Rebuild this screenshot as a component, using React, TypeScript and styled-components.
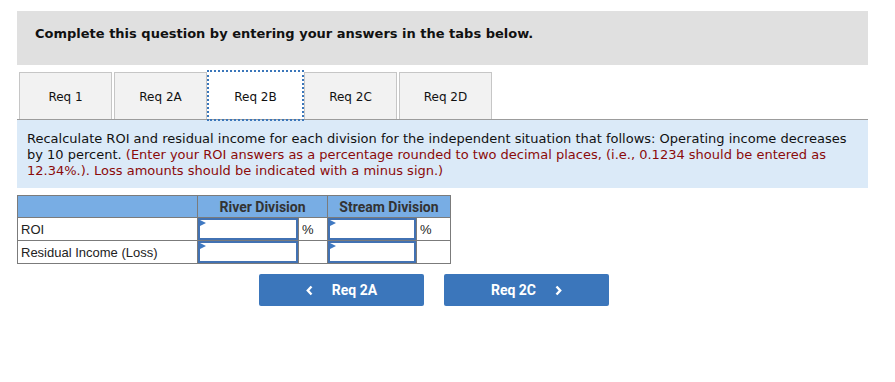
import React from "react";
import styled, { createGlobalStyle } from "styled-components";

const Global = createGlobalStyle`
  html, body { margin: 0; padding: 0; background: #fff; }
  body { font-family: "DejaVu Sans", Verdana, sans-serif; }
`;

const Page = styled.div`
  width: 851px;
  margin: 11px 0 0 17px;
`;

const Header = styled.div`
  background: #e0e0e0;
  height: 54px;
  box-sizing: border-box;
  padding: 15px 18px 0;
  font-family: "DejaVu Sans", Verdana, sans-serif;
  font-weight: bold;
  font-size: 13px;
  line-height: 16px;
  color: #111;
`;

const TabRow = styled.div`
  display: flex;
  gap: 2px;
  margin-top: 7px;
  padding-left: 2px;
  border-bottom: 1px solid #9c9c9c;
`;

const Tab = styled.div<{ $active?: boolean }>`
  width: 93px;
  height: 47px;
  box-sizing: border-box;
  display: flex;
  align-items: center;
  justify-content: center;
  font-size: 12px;
  color: #111;
  background: ${(p) => (p.$active ? "#fff" : "#f2f2f2")};
  border: 1px solid ${(p) => (p.$active ? "#fff" : "#c6c6c6")};
  border-bottom: none;
  padding-top: 2px;
  position: relative;
  outline: ${(p) => (p.$active ? "2px dotted #3a76ba" : "none")};
  z-index: ${(p) => (p.$active ? 2 : 0)};
`;

const Instructions = styled.div`
  background: #dbeaf8;
  padding: 11px 10px 9px;
  font-size: 13px;
  line-height: 16px;
  color: #111;
`;

const Red = styled.span`
  color: #8b0a0a;
`;

const Table = styled.table`
  margin-top: 7px;
  border-collapse: collapse;
  font-family: "Liberation Sans", Arial, sans-serif;
  font-size: 13px;
`;

const HeadCell = styled.th`
  background: #78ade4;
  border: 1px solid #7b7b7b;
  height: 21px;
  padding: 0;
  font-family: Roboto, "Liberation Sans", sans-serif;
  font-weight: bold;
  font-size: 14px;
  color: #333;
  text-align: center;
`;

const LabelCell = styled.td`
  border: 1px solid #7b7b7b;
  width: 176px;
  height: 21px;
  padding: 0 0 0 3px;
  color: #222;
`;

const InputCell = styled.td<{ $w: number }>`
  border: 1px solid #7b7b7b;
  width: ${(p) => p.$w}px;
  padding: 0;
  position: relative;
`;

const UnitCell = styled.td<{ $w: number }>`
  border: 1px solid #7b7b7b;
  width: ${(p) => p.$w}px;
  padding: 0 0 0 3px;
  box-sizing: border-box;
  color: #222;
`;

const InputBox = styled.div`
  height: 22px;
  box-sizing: border-box;
  border: 2px solid #4272b3;
  background: #fff;
  position: relative;
  &::before {
    content: "";
    position: absolute;
    left: 0;
    top: 0;
    border-left: 6px solid #3f79c2;
    border-top: 3px solid transparent;
    border-bottom: 3px solid transparent;
  }
`;

const ButtonRow = styled.div`
  display: flex;
  gap: 20px;
  margin: 10px 0 0 242px;
`;

const NavButton = styled.div`
  width: 165px;
  height: 32px;
  border-radius: 2px;
  background: #3b76bb;
  color: #fff;
  display: flex;
  align-items: center;
  justify-content: center;
  gap: 19px;
  font-family: Roboto, "Liberation Sans", sans-serif;
  font-weight: bold;
  font-size: 14px;
`;

const Chevron = ({ dir }: { dir: "left" | "right" }) => (
  <svg width="7" height="11" viewBox="0 0 7 11">
    <polyline
      points={dir === "left" ? "5.5,1.5 1.8,5.5 5.5,9.5" : "1.5,1.5 5.2,5.5 1.5,9.5"}
      fill="none"
      stroke="#fff"
      strokeWidth="2.4"
    />
  </svg>
);

const tabs = ["Req 1", "Req 2A", "Req 2B", "Req 2C", "Req 2D"];

export default function App() {
  return (
    <>
      <Global />
      <Page>
        <Header>Complete this question by entering your answers in the tabs below.</Header>
        <TabRow>
          {tabs.map((t) => (
            <Tab key={t} $active={t === "Req 2B"}>
              {t}
            </Tab>
          ))}
        </TabRow>
        <Instructions>
          Recalculate ROI and residual income for each division for the independent situation that
          follows: Operating income decreases by 10 percent.{" "}
          <Red>
            (Enter your ROI answers as a percentage rounded to two decimal places, (i.e., 0.1234
            should be entered as 12.34%.). Loss amounts should be indicated with a minus sign.)
          </Red>
        </Instructions>
        <Table>
          <thead>
            <tr>
              <HeadCell />
              <HeadCell colSpan={2}>River Division</HeadCell>
              <HeadCell colSpan={2}>Stream Division</HeadCell>
            </tr>
          </thead>
          <tbody>
            <tr>
              <LabelCell>ROI</LabelCell>
              <InputCell $w={100}>
                <InputBox />
              </InputCell>
              <UnitCell $w={29}>%</UnitCell>
              <InputCell $w={88}>
                <InputBox />
              </InputCell>
              <UnitCell $w={34}>%</UnitCell>
            </tr>
            <tr>
              <LabelCell>Residual Income (Loss)</LabelCell>
              <InputCell $w={100}>
                <InputBox />
              </InputCell>
              <UnitCell $w={29} />
              <InputCell $w={88}>
                <InputBox />
              </InputCell>
              <UnitCell $w={34} />
            </tr>
          </tbody>
        </Table>
        <ButtonRow>
          <NavButton>
            <Chevron dir="left" />
            <span>Req 2A</span>
          </NavButton>
          <NavButton>
            <span>Req 2C</span>
            <Chevron dir="right" />
          </NavButton>
        </ButtonRow>
      </Page>
    </>
  );
}
